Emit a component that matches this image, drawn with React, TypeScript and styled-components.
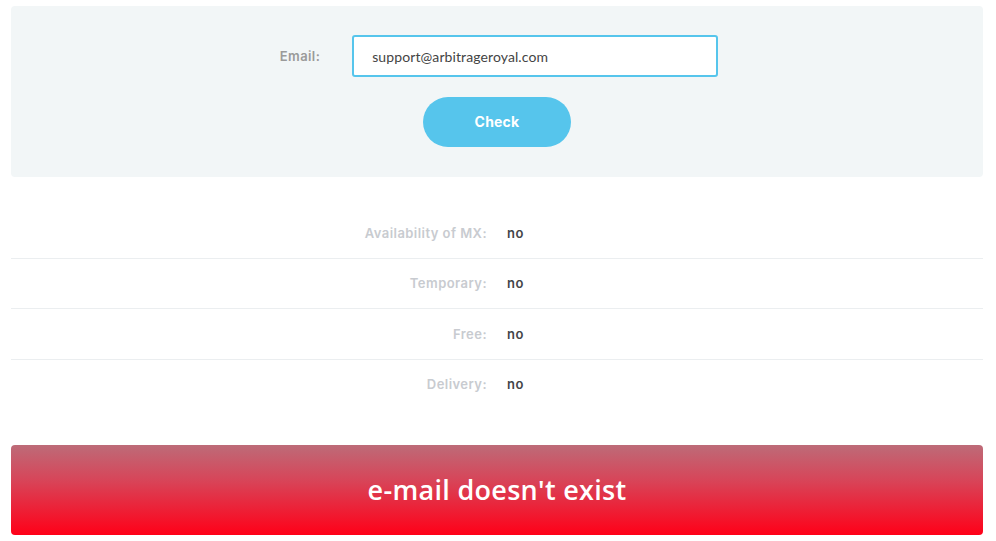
import React from "react";
import styled, { createGlobalStyle } from "styled-components";

const Global = createGlobalStyle`
  html, body { margin: 0; padding: 0; background: #ffffff; }
  body { font-family: "Inter", "Liberation Sans", sans-serif; }
`;

const Page = styled.div`
  width: 972px;
  padding: 6px 13px 6px 11px;
  display: flex;
  flex-direction: column;
`;

const FormPanel = styled.div`
  background: #f2f6f7;
  border-radius: 4px;
  height: 171px;
  box-sizing: border-box;
  padding-top: 29px;
  display: flex;
  flex-direction: column;
  align-items: center;
  gap: 20px;
`;

const FieldRow = styled.div`
  display: flex;
  align-items: center;
  gap: 32px;
  margin-left: 4px;
`;

const FieldLabel = styled.label`
  font-family: "Inter", "Liberation Sans", sans-serif;
  font-weight: 600;
  font-size: 13px;
  letter-spacing: 0.4px;
  color: #9a9a9a;
`;

const EmailInput = styled.input`
  width: 366px;
  height: 42px;
  box-sizing: border-box;
  border: 2px solid #56c5ec;
  border-radius: 3px;
  padding: 0 18px;
  font-family: "Lato", "Open Sans", sans-serif;
  font-size: 14px;
  letter-spacing: 0.1px;
  color: #444;
  background: #fff;
  outline: none;
`;

const CheckButton = styled.button`
  width: 148px;
  height: 50px;
  border: none;
  border-radius: 25px;
  background: #56c5ec;
  color: #fff;
  font-family: "Inter", "Liberation Sans", sans-serif;
  font-weight: 700;
  font-size: 14px;
  letter-spacing: 0.2px;
  padding-bottom: 2px;
  cursor: pointer;
`;

const Results = styled.div`
  margin-top: 31px;
  display: flex;
  flex-direction: column;
`;

const ResultRow = styled.div<{ $last?: boolean }>`
  display: grid;
  grid-template-columns: 1fr 1fr;
  column-gap: 20px;
  align-items: center;
  height: 49.5px;
  border-bottom: ${(p) => (p.$last ? "none" : "1px solid #ebeef0")};
  font-family: "Inter", "Liberation Sans", sans-serif;
  font-weight: 600;
  font-size: 13px;
  letter-spacing: 0.45px;
`;

const ResultLabel = styled.div`
  text-align: right;
  color: #c8cbd0;
`;

const ResultValue = styled.div`
  color: #444548;
`;

const Banner = styled.div`
  margin-top: 36px;
  height: 90px;
  border-radius: 4px;
  background: linear-gradient(to bottom, #bd6b78 0%, #d84458 40%, #ff0018 100%);
  display: flex;
  align-items: center;
  justify-content: center;
  padding-bottom: 2px;
  box-sizing: border-box;
  color: #fff;
  font-family: "Open Sans", "Lato", sans-serif;
  font-weight: 600;
  font-size: 27px;
  letter-spacing: 0.3px;
`;

const rows = [
  { label: "Availability of MX:", value: "no" },
  { label: "Temporary:", value: "no" },
  { label: "Free:", value: "no" },
  { label: "Delivery:", value: "no" },
];

export default function App() {
  return (
    <>
      <Global />
      <Page>
        <FormPanel>
          <FieldRow>
            <FieldLabel htmlFor="email">Email:</FieldLabel>
            <EmailInput id="email" defaultValue="support@arbitrageroyal.com" />
          </FieldRow>
          <CheckButton>Check</CheckButton>
        </FormPanel>
        <Results>
          {rows.map((r, i) => (
            <ResultRow key={r.label} $last={i === rows.length - 1}>
              <ResultLabel>{r.label}</ResultLabel>
              <ResultValue>{r.value}</ResultValue>
            </ResultRow>
          ))}
        </Results>
        <Banner>e-mail doesn't exist</Banner>
      </Page>
    </>
  );
}
